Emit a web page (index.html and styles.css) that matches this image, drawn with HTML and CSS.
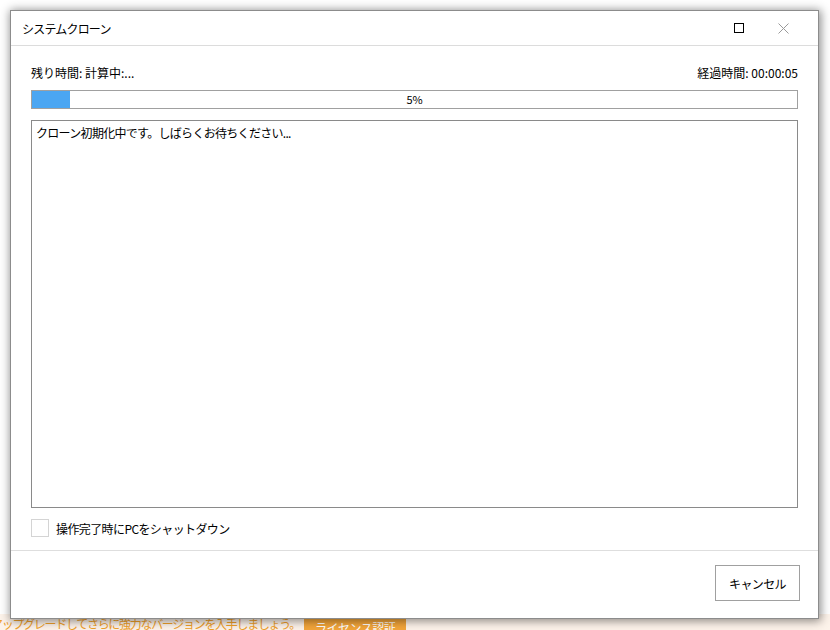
FILE: index.html
```html
<!DOCTYPE html>
<html lang="ja">
<head>
  <meta charset="utf-8">
  <title>システムクローン</title>
  <link rel="stylesheet" href="styles.css">
</head>
<body>
  <div class="app">
    <div class="app-body"></div>
    <div class="footer">
      <span class="promo">アップグレードしてさらに強力なバージョンを入手しましょう。</span>
      <span class="license">ライセンス認証</span>
    </div>

    <div class="dialog">
      <div class="titlebar">
        <span class="title">システムクローン</span>
        <span class="win-btn max"><span class="max-box"></span></span>
        <span class="win-btn close">
          <svg width="11" height="11" viewBox="0 0 11 11"><path d="M0.5 0.5 L10.5 10.5 M10.5 0.5 L0.5 10.5" stroke="#9a9a9a" stroke-width="1" fill="none"/></svg>
        </span>
      </div>

      <div class="content">
        <div class="times">
          <span>残り時間: 計算中:...</span>
          <span>経過時間: 00:00:05</span>
        </div>
        <div class="progress">
          <div class="progress-fill" style="width: 5%"></div>
          <span class="progress-text">5%</span>
        </div>
        <div class="log">クローン初期化中です。しばらくお待ちください...</div>
        <label class="shutdown">
          <span class="checkbox"></span>
          <span>操作完了時にPCをシャットダウン</span>
        </label>
      </div>

      <div class="actions">
        <button class="btn">キャンセル</button>
      </div>
    </div>
  </div>
</body>
</html>
```

FILE: styles.css
```css
html, body { margin: 0; padding: 0; }
body { font-family: "Noto Sans CJK JP", "Liberation Sans", sans-serif; font-size: 12px; color: #000; background: #fff; }
.app { position: relative; width: 830px; height: 630px; overflow: hidden; background: #fff; }
.app-body { height: 614px; }
.footer { height: 16px; background: #fdf3ea; display: flex; align-items: flex-start; gap: 4px; white-space: nowrap; }
.promo { color: #f0a02a; font-size: 12px; line-height: 20px; margin-left: -9px; letter-spacing: -1.3px; }
.license { background: #f3a53a; color: #fff; font-size: 12px; line-height: 20px; margin-top: 4px; padding: 0 11px; letter-spacing: -0.5px; }

.dialog { position: absolute; left: 10px; top: 10px; width: 807px; height: 607px; background: #fff; border: 1px solid #8c8c8c; box-shadow: 1px 1px 9px 1px rgba(0,0,0,0.45); display: flex; flex-direction: column; }
.titlebar { height: 34px; border-bottom: 1px solid #dcdcdc; display: flex; align-items: center; padding-left: 11px; }
.title { flex: 1; letter-spacing: -0.8px; }
.win-btn { width: 45px; height: 34px; display: flex; align-items: center; justify-content: center; }
.max-box { width: 8px; height: 8px; border: 1px solid #000; }
.close { margin-right: 12px; }

.content { flex: 1; padding: 0 20px 0 20px; display: flex; flex-direction: column; }
.times { display: flex; justify-content: space-between; margin-top: 18px; line-height: 17px; }
.progress { position: relative; margin-top: 9px; height: 17px; border: 1px solid #a0a0a0; background: #fff; }
.progress-fill { height: 100%; background: #4ba6f2; }
.progress-text { position: absolute; left: 0; right: 0; top: 0; text-align: center; line-height: 17px; font-size: 11px; }
.log { margin-top: 11px; height: 380px; border: 1px solid #8a8a8a; padding: 3px 4px; letter-spacing: -0.7px; }
.shutdown { display: flex; align-items: center; gap: 7px; margin-top: 11px; letter-spacing: -0.6px; }
.checkbox { width: 16px; height: 16px; border: 1px solid #d4d4d4; background: #fff; }

.actions { height: 67px; border-top: 1px solid #dedede; display: flex; justify-content: flex-end; align-items: flex-start; padding-right: 18px; margin-top: 13px; }
.btn { margin-top: 14px; width: 85px; height: 36px; background: #fff; border: 1px solid #a0a0a0; font-family: inherit; font-size: 12px; color: #000; letter-spacing: -0.6px; }
```
